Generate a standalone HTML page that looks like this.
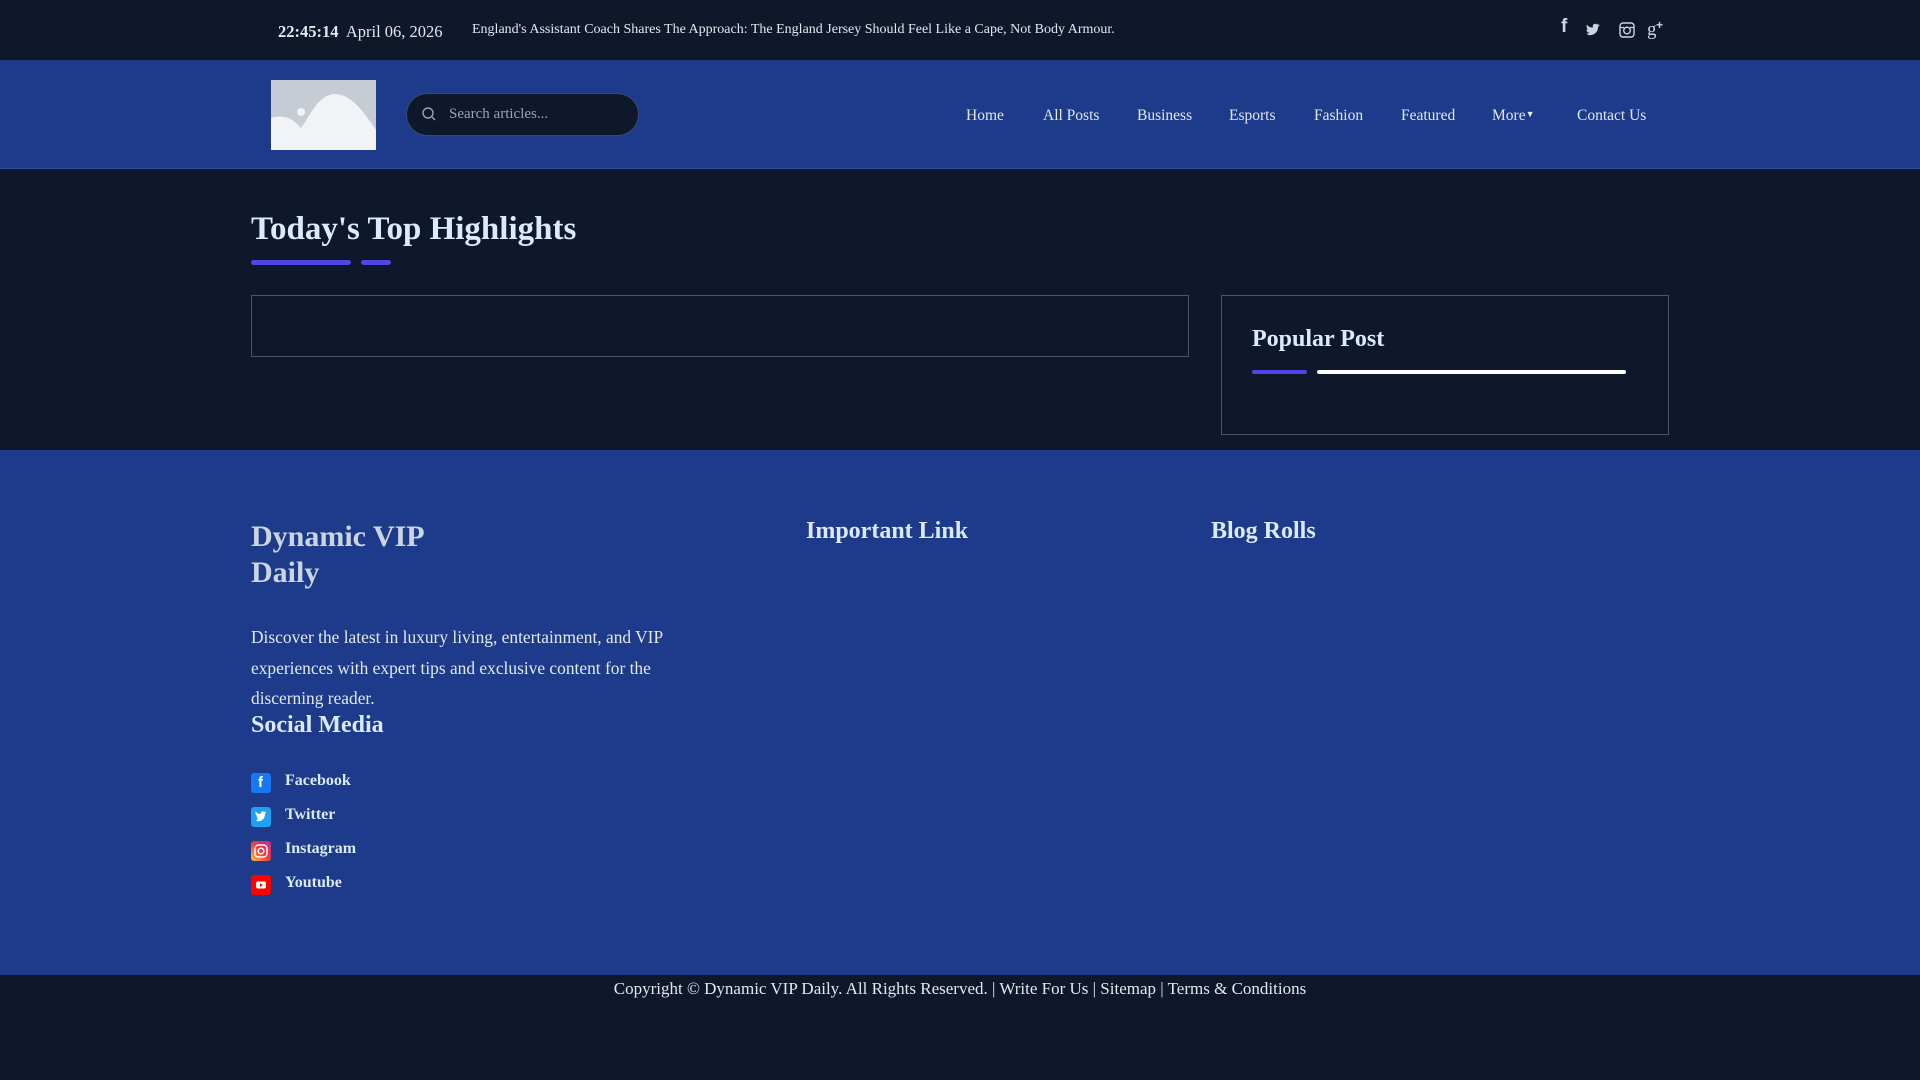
<!DOCTYPE html>
<html><head><meta charset="utf-8"><style>
*{margin:0;padding:0;box-sizing:border-box}
body{width:1920px;height:1080px;background:#0f172a;font-family:"Liberation Serif",serif;position:relative;overflow:hidden}
.a{position:absolute;white-space:nowrap}
#top{position:absolute;left:0;top:0;width:1920px;height:60px;background:#0f172a}
#hdr{position:absolute;left:0;top:60px;width:1920px;height:109px;background:#1e3a8a;border-bottom:1px solid #2c4aa0}
.nav{top:107px;font-size:15.5px;color:#e2e8f0}
#foot{position:absolute;left:0;top:450px;width:1920px;height:525px;background:#1e3a8a}
.si{width:20px;height:20px;border-radius:3px;position:absolute;left:251px}
.sl{left:285px;font-size:16px;font-weight:bold;color:#dbeafe}
</style></head><body>
<div id="top"></div>
<div class="a" style="left:278px;top:22px;font-size:16.5px;color:#e2e8f0"><b>22:45:14</b>&nbsp; April 06, 2026</div>
<div class="a" style="left:472px;top:22px;font-size:14px;color:#e2e8f0">England's Assistant Coach Shares The Approach: The England Jersey Should Feel Like a Cape, Not Body Armour.</div>
<div class="a" style="left:1561px;top:16px;font:bold 19px 'Liberation Sans',sans-serif;color:#cbd5e1">f</div>
<svg class="a" style="left:1558px;top:19px" width="110" height="22" viewBox="0 0 110 22" fill="none" stroke="#cbd5e1">
<path d="M30 16c5 1 10-2 10-8l2-2-2 .5 1-2-2 1c-2-2-5 0-4 3-3 0-5-1-6-3-1 2 0 4 1 5h-1.5c0 2 1.5 3 3 3.5-1 .5-2 .5-3 .5 1 1 2.5 1.5 1 1z" fill="#cbd5e1" stroke="none"/>
<rect x="62" y="4" width="14" height="14" rx="3" stroke-width="1.4"/><circle cx="69" cy="11.5" r="3.3" stroke-width="1.4"/><path d="M62 8.5h4M72 8.5h4" stroke-width="1.2"/>
<text x="89" y="16" font-size="19" fill="#cbd5e1" stroke="none" font-family="Liberation Serif">g</text><text x="98" y="10" font-size="12" font-weight="bold" fill="#cbd5e1" stroke="none" font-family="Liberation Sans">+</text>
</svg>
<div id="hdr"></div>
<svg class="a" style="left:271px;top:80px" width="105" height="70" viewBox="0 0 105 70"><rect width="105" height="70" fill="#c5ccd4"/><path d="M0 38c12-4 22 0 30 10 10-14 18-34 34-34 17 0 30 20 41 36v20H0z" fill="#f1f3f5"/><circle cx="30" cy="32" r="4" fill="#f1f3f5"/></svg>
<div class="a" style="left:406px;top:93px;width:233px;height:43px;border-radius:22px;background:#0f172a;border:1px solid #3a4a6a"></div>
<svg class="a" style="left:421px;top:106px" width="16" height="16" viewBox="0 0 16 16" fill="none" stroke="#94a3b8" stroke-width="1.4"><circle cx="7" cy="7" r="5"/><path d="M11 11l3 3"/></svg>
<div class="a" style="left:449px;top:106px;font-size:15px;color:#94a3b8">Search articles...</div>
<div class="a nav" style="left:966px">Home</div>
<div class="a nav" style="left:1043px">All Posts</div>
<div class="a nav" style="left:1137px">Business</div>
<div class="a nav" style="left:1229px">Esports</div>
<div class="a nav" style="left:1314px">Fashion</div>
<div class="a nav" style="left:1401px">Featured</div>
<div class="a nav" style="left:1492px">More<span style="font-size:9px;position:relative;top:-3px">▼</span></div>
<div class="a nav" style="left:1577px">Contact Us</div>
<div class="a" style="left:251px;top:211px;font-size:33px;font-weight:bold;color:#dbeafe">Today's Top Highlights</div>
<div class="a" style="left:251px;top:260px;width:100px;height:5px;border-radius:3px;background:#4f46e5"></div>
<div class="a" style="left:361px;top:260px;width:30px;height:5px;border-radius:3px;background:#4f46e5"></div>
<div class="a" style="left:251px;top:295px;width:938px;height:62px;border:1px solid #475569"></div>
<div class="a" style="left:1221px;top:295px;width:448px;height:140px;border:1px solid #475569"></div>
<div class="a" style="left:1252px;top:326px;font-size:24px;font-weight:bold;color:#dbeafe">Popular Post</div>
<div class="a" style="left:1252px;top:370px;width:55px;height:4px;border-radius:2px;background:#4f46e5"></div>
<div class="a" style="left:1317px;top:370px;width:309px;height:4px;border-radius:2px;background:#fff"></div>
<div id="foot"></div>
<div class="a" style="left:251px;top:519px;font-size:30px;font-weight:bold;color:#cbd5e1;line-height:36px">Dynamic VIP<br>Daily</div>
<div class="a" style="left:251px;top:622px;font-size:17.4px;color:#e2e8f0;line-height:30.5px">Discover the latest in luxury living, entertainment, and VIP<br>experiences with expert tips and exclusive content for the<br>discerning reader.</div>
<div class="a" style="left:251px;top:712px;font-size:24px;font-weight:bold;color:#dbeafe">Social Media</div>
<div class="a" style="left:806px;top:518px;font-size:24px;font-weight:bold;color:#dbeafe">Important Link</div>
<div class="a" style="left:1211px;top:518px;font-size:24px;font-weight:bold;color:#dbeafe">Blog Rolls</div>
<div class="si" style="top:773px;background:#1877f2"><span style="position:absolute;left:7px;top:1px;color:#fff;font:bold 15px 'Liberation Sans'">f</span></div>
<div class="a sl" style="top:772px">Facebook</div>
<div class="si" style="top:807px;background:#1da1f2"><svg width="20" height="20" viewBox="0 0 20 20"><path d="M5 14c4 1 9-1 9-7l1.5-1.5-1.5.3.8-1.5-1.6.7c-1.5-1.5-4 0-3.4 2-2.5 0-4-1-5-2.5-.8 1.5 0 3 1 4H5.5c0 1.5 1 2.3 2.3 2.7-.8.3-1.6.3-2.300.3.8.8 1.8 1.2.5 1.5z" fill="#fff"/></svg></div>
<div class="a sl" style="top:806px">Twitter</div>
<div class="si" style="top:841px;background:linear-gradient(45deg,#fdc83a,#f5363c 50%,#c02d9a)"><svg width="20" height="20" viewBox="0 0 20 20" fill="none" stroke="#fff" stroke-width="1.5"><rect x="4" y="4" width="12" height="12" rx="3.5"/><circle cx="10" cy="10" r="2.8"/></svg></div>
<div class="a sl" style="top:840px">Instagram</div>
<div class="si" style="top:875px;background:#f00"><svg width="20" height="20" viewBox="0 0 20 20"><rect x="5" y="6.5" width="10" height="7" rx="2" fill="#fff"/><path d="M9 8.3v3.4l3-1.7z" fill="#f00"/></svg></div>
<div class="a sl" style="top:874px">Youtube</div>
<div class="a" style="left:0;width:1920px;text-align:center;top:979px;font-size:17px;color:#e2e8f0">Copyright © Dynamic VIP Daily. All Rights Reserved. | Write For Us | Sitemap | Terms &amp; Conditions</div>
</body></html>
